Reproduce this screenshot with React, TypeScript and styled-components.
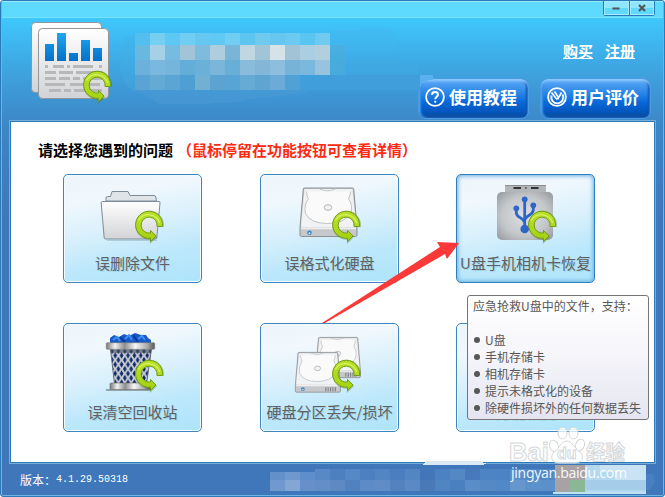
import React from "react";
import styled, { createGlobalStyle, css } from "styled-components";

const GlobalStyle = createGlobalStyle`
  * { box-sizing: border-box; }
  html, body { margin: 0; padding: 0; overflow: hidden; background: #fff; }
  body { font-family: "Noto Sans CJK SC", "Noto Sans", sans-serif; }
`;

const Window = styled.div`
  position: relative;
  display: flex;
  flex-direction: column;
  width: 665px;
  height: 497px;
  overflow: hidden;
  border: 1px solid #2a79b8;
  border-radius: 3px;
  background: linear-gradient(#3fc8fc 0, #3fc8fc 17px, #3eb4ee 45px, #3e9fdb 78px, #3d88c8 120px, #3d80c1 160px, #4077ba 215px);
  box-shadow: inset 0 0 0 1px #6fb3e4;
`;

const TitleBar = styled.div`
  display: flex;
  justify-content: flex-end;
  flex: none;
  height: 17px;
  margin: 0 1px;
  padding-right: 8px;
  background: #5fdaff;
  border-top: 1px solid #9be9ff;
  border-bottom: 1px solid #74e2ff;
`;

const WindowControls = styled.div`
  display: flex;
  width: 52px;
  height: 15px;
  margin-top: -1px;
  border: 1px solid #2a79b8;
  border-top: 0;
  border-radius: 0 0 3px 3px;
  background: linear-gradient(#8fe7ff 50%, #5fd9fe 50%);
`;

const ControlButton = styled.button`
  display: flex;
  flex: 1;
  align-items: center;
  justify-content: center;
  padding: 0;
  border: 0;
  background: none;
  box-shadow: inset 0 0 0 1px #a6ecff;
  & + & { border-left: 1px solid #2a79b8; }
`;

const Header = styled.header`
  display: flex;
  flex: none;
  justify-content: space-between;
  height: 102px;
  padding: 0 13px 0 29px;
`;

const Logo = styled.svg`
  width: 84px;
  height: 84px;
  margin-top: 2px;
`;

const HeaderActions = styled.div`
  display: flex;
  flex-direction: column;
  align-items: flex-end;
`;

const Links = styled.nav`
  display: flex;
  gap: 12px;
  height: 60px;
  padding: 23px 16px 0 0;
`;

const Link = styled.a`
  color: #fff;
  font-size: 15px;
  font-weight: 700;
  line-height: 19px;
  height: 18px;
  border-bottom: 1px solid #fff;
`;

const ButtonRow = styled.div`
  display: flex;
  gap: 11px;
`;

const BigButton = styled.button`
  display: flex;
  align-items: center;
  gap: 4px;
  width: 111px;
  height: 41px;
  padding: 0 0 3px 6px;
  border: 1px solid #4b9ce4;
  border-radius: 8px;
  background: linear-gradient(#6cb6fb 0, #4a9bf1 14%, #2482e6 40%, #0868d8 60%, #0456bc 85%, #104a99 100%);
  box-shadow: inset 0 2px 2px #8cc9ff, inset 2px 0 2px #368ee8, inset -2px 0 2px #0b50ac;
  color: #fff;
  font-family: inherit;
  font-size: 17px;
  font-weight: 700;
  line-height: 22px;
  white-space: nowrap;
`;

const Panel = styled.main`
  flex: none;
  width: 647px;
  height: 344px;
  margin-left: 8px;
  padding: 17px 0 0 28px;
  border: 1px solid #77add9;
  background: #fff;
  box-shadow: inset 0 0 0 1px #2a79b8;
`;

const Question = styled.h1`
  display: flex;
  margin: 0;
  height: 24px;
  line-height: 23px;
  font-size: 15px;
  font-weight: 700;
  color: #000;
`;

const Hint = styled.span`
  margin-left: 4px;
  color: #fb2b13;
`;

const CardGrid = styled.div`
  display: grid;
  grid-template-columns: 197px 196px 139px;
  row-gap: 40px;
  padding: 12px 0 0 25px;
`;

const Card = styled.button<{ $active?: boolean }>`
  display: flex;
  flex-direction: column;
  align-items: center;
  width: 139px;
  height: 109px;
  padding: 0;
  border: 1px solid #3d86c1;
  border-radius: 5px;
  background: linear-gradient(168deg, #edf5fc 0%, #f0f8fd 22%, #d9f0fc 48%, #bde8fb 72%, #ade4fb 100%);
  box-shadow: inset 0 0 0 1px #f4fbff;
  font-family: inherit;
  ${(p) => p.$active && css`
    border-color: #2f80bf;
    box-shadow: inset 0 0 4px 1px #67aedd;
  `}
`;

const Art = styled.svg`
  flex: none;
  width: 137px;
  height: 76px;
`;

const CardLabel = styled.span`
  height: 24px;
  line-height: 24px;
  color: #625f60;
  font-size: 15px;
  white-space: nowrap;
  text-shadow: 1px 1px 1px #9bd0e6;
`;

const Footer = styled.footer`
  display: flex;
  align-items: center;
  flex: 1;
  padding: 0 0 1px 19px;
  color: #fff;
  font-size: 12px;
`;

const VersionNumber = styled.span`
  font-family: "Liberation Mono", monospace;
  font-size: 10px;
`;

const Tooltip = styled.div`
  position: absolute;
  left: 466px;
  top: 294px;
  width: 182px;
  height: 125px;
  padding: 1px 0 0 5px;
  border: 1px solid #767676;
  border-radius: 3px;
  background: linear-gradient(#fff, #f6f6fb 45%, #e4e5f0);
  color: #575757;
  font-size: 12px;
  line-height: 17px;
  white-space: nowrap;
`;

const TipList = styled.ul`
  margin: 17px 0 0;
  padding: 0;
  list-style: none;
`;

const TipItem = styled.li`
  display: flex;
  align-items: center;
  gap: 5px;
  height: 17px;
  padding-left: 1px;
  &::before {
    content: "";
    width: 6px;
    height: 6px;
    border-radius: 50%;
    background: #575757;
  }
`;

const Overlay = styled.svg`
  position: absolute;
  left: -1px;
  top: -1px;
  width: 665px;
  height: 497px;
  pointer-events: none;
`;

const Gradients = () => (
  <defs>
    <linearGradient id="lime" x1="0" y1="0" x2="0" y2="1">
      <stop offset="0" stopColor="#b9e02c" />
      <stop offset="1" stopColor="#a5d110" />
    </linearGradient>
    <linearGradient id="paper" x1="0" y1="0" x2="0" y2="1">
      <stop offset="0" stopColor="#ffffff" />
      <stop offset="1" stopColor="#d2d3d6" />
    </linearGradient>
    <linearGradient id="bar" x1="0" y1="0" x2="0" y2="1">
      <stop offset="0" stopColor="#20a6f2" />
      <stop offset="1" stopColor="#0470c8" />
    </linearGradient>
    <linearGradient id="metal" x1="0" y1="0" x2="1" y2="0">
      <stop offset="0" stopColor="#777" />
      <stop offset="0.18" stopColor="#f1f1f1" />
      <stop offset="0.38" stopColor="#8e8e8e" />
      <stop offset="0.6" stopColor="#f7f7f7" />
      <stop offset="0.85" stopColor="#a9a9a9" />
      <stop offset="1" stopColor="#555" />
    </linearGradient>
    <radialGradient id="usb" cx="0.5" cy="0.5" r="0.7">
      <stop offset="0" stopColor="#dfe1e3" />
      <stop offset="0.6" stopColor="#c3c6c9" />
      <stop offset="1" stopColor="#93989c" />
    </radialGradient>
    <pattern id="mesh" width="6.4" height="9" patternUnits="userSpaceOnUse" x="49" y="28">
      <rect width="6.4" height="9" fill="#c6cad1" />
      <path d="M3.2 1.3 5 4.5 3.2 7.7 1.4 4.5Z M0-3.2 1.8 0 0 3.2-1.8 0Z M6.4-3.2 8.2 0 6.4 3.2 4.6 0Z M0 5.8 1.8 9 0 12.2-1.8 9Z M6.4 5.8 8.2 9 6.4 12.2 4.6 9Z" fill="#122b68" />
    </pattern>
  </defs>
);

const RestoreArrow = ({ x, y }: { x: number; y: number }) => (
  <g transform={`translate(${x} ${y})`}>
    <path d="M28.3 16.2A13.8 13.8 0 1 0 15.5 28V31.6L21.8 25.6" fill="none" stroke="#46701b" strokeWidth="1.2" opacity=".35" />
    <path d="M27.5 15.5A13.5 13.5 0 1 0 15.5 27.2V30.6L21 25 15.5 19.4V22A8 8 0 1 1 22 15.5Z" fill="url(#lime)" stroke="#719f12" strokeWidth="1" />
    <path d="M24.8 12A11.8 11.8 0 0 0 3.4 9.5" fill="none" stroke="#d9f261" strokeWidth="1.3" />
  </g>
);

const FolderArt = () => (
  <g stroke="#7d8c98">
    <path d="M43 27V24Q43 22.5 44.5 22.5H47.5L49 17.5H65L67 21.5H91Q92.5 21.5 92.8 23L93.5 27Z" fill="#dfe4e8" />
    <path d="M39.5 27.5H96Q97.3 27.5 97 29L93.8 64Q93.6 65 92.5 65H42.5Q41.4 65 41.2 64L38.2 29Q38 27.5 39.5 27.5Z" fill="url(#paper)" />
    <path d="M40 28.7H95.5" stroke="#fff" />
    <path d="M44 66.5H94" stroke="#9cb6c4" opacity=".6" />
  </g>
);

const Drive = ({ transform, vents }: { transform: string; vents?: boolean }) => (
  <g transform={transform}>
    <path d="M5 .5H53Q54 .5 54.2 1.5L57.5 40V47.5Q57.5 49 56 49H2Q.5 49 .5 47.5V40L3.8 1.5Q4 .5 5 .5Z" fill="#c6c8cb" stroke="#8c9093" />
    <path d="M5 1.5H53L56.5 38.5Q56.5 40 55 40H3Q1.5 40 1.5 38.5Z" fill="#f1f2f3" />
    <path d="M7 4Q7 9 9 11Q4 18 6 26Q11 36 28 36T51 26Q54 18 49 11Q51 8 51 4" fill="#fafafa" stroke="#bfc3c6" />
    <path d="M20 1.5Q28 5 36 1.5" fill="none" stroke="#c4c7ca" />
    <ellipse cx="28.5" cy="20" rx="3.8" ry="2.8" fill="#f2f2f2" stroke="#b0b4b7" />
    <path d="M1.5 41H56.5" stroke="#efefef" strokeWidth="1.5" />
    <circle cx="10" cy="45.2" r="2.3" fill="#3d83ca" />
    <circle cx="10" cy="45.8" r="1" fill="#c5efff" />
    {vents && <path d="M39 43V48M42 43V48M45 43V48M48 43V48M51 43V48" stroke="#777b80" strokeWidth="1.3" />}
  </g>
);

const DriveArt = () => <Drive transform="translate(39.5 13.5)" />;

const PartitionArt = () => (
  <>
    <Drive transform="translate(55.5 14) scale(.78 .83)" vents />
    <Drive transform="translate(35 29) scale(.79 .82)" vents />
  </>
);

const UsbArt = () => (
  <>
    <rect x="49" y="11" width="41" height="8" fill="#b2b6b9" />
    <path d="M49 11.5H90" stroke="#8a8e91" />
    <path d="M57.5 14H65M75 14H82.5" stroke="#333" strokeWidth="2" />
    <rect x="69" y="13" width="1.6" height="1.8" fill="#555" />
    <rect x="41" y="18" width="56" height="48" rx="5" fill="url(#usb)" />
    <path d="M68.7 26V54M60.3 35V39Q60.8 42 64 43.5T68.7 48.5M77.3 32V36Q77 39 73.5 41T68.7 45.5" fill="none" stroke="#2f66c6" strokeWidth="2.8" />
    <g fill="#2f66c6">
      <circle cx="68.7" cy="25.3" r="2.9" />
      <circle cx="60.3" cy="34.3" r="2.9" />
      <circle cx="77.3" cy="31.3" r="2.9" />
      <circle cx="68.7" cy="55" r="4.3" />
    </g>
  </>
);

const TrashArt = () => (
  <>
    <path d="M43 67H88" stroke="#7d8b94" strokeWidth="1.5" />
    <path d="M47 20V15L51 12 56 14 61 11 66 13 72 10 78 12 83 12 85 15 88 17V20Z" fill="#1859c8" />
    <path d="M50 17 54 14 57 18M62 16 66 12 69 17M75 16 79 13 82 17" fill="none" stroke="#3d91f4" strokeWidth="2" />
    <path d="M57 14 62 19M70 12 75 19" stroke="#0b348e" strokeWidth="1.5" />
    <path d="M47.5 26H88.5L83.5 61H51.5Z" fill="url(#mesh)" stroke="#666c75" />
    <path d="M47.5 27H88L87.5 30H48Z" fill="#4b525d" opacity=".6" />
    <rect x="43.3" y="19.7" width="48.4" height="6.6" rx="1" fill="url(#metal)" stroke="#777" strokeWidth=".6" />
    <rect x="47" y="60" width="40" height="6.5" rx="1" fill="url(#metal)" stroke="#6b6b6b" strokeWidth=".6" />
  </>
);

const cards: { label: string; art?: React.ReactNode; active?: boolean }[] = [
  { label: "误删除文件", art: <FolderArt /> },
  { label: "误格式化硬盘", art: <DriveArt /> },
  { label: "U盘手机相机卡恢复", art: <UsbArt />, active: true },
  { label: "误清空回收站", art: <TrashArt /> },
  { label: "硬盘分区丢失/损坏", art: <PartitionArt /> },
  { label: "万能恢复" },
];

const tips = ["U盘", "手机存储卡", "相机存储卡", "提示未格式化的设备", "除硬件损坏外的任何数据丢失"];

const headerMosaic: { y: number; h: number; cells: string[] }[] = [
  { y: 33, h: 12, cells: ["#53bfee", "#75cff3", "#5dc8f4", "#70cdf3", "#66c8f0", "#5fc8f3", "#72cdf3", "#5cc6f1", "#70caef", "#66c6ef", "#6bcaf1", "#5bc5f1", "#69cbf3", "#71cbf0"] },
  { y: 45, h: 15, cells: ["#69b8df", "#a6d0e5", "#76bce0", "#a1c4d8", "#7fbcdb", "#aecddd", "#78b5d6", "#c0d7e2", "#a2c4d7", "#d5e3e9", "#a2c2d5", "#abcee2", "#b1cfdd"] },
  { y: 60, h: 15, cells: ["#6cb1db", "#7ab8df", "#75b5db", "#62aed9", "#6bb0d8", "#79b6da", "#68afd8", "#89bbdb", "#83b6d7", "#8dbedd", "#76b3d7", "#7bb8de", "#98c3dc"] },
  { y: 75, h: 15, cells: ["#5aa4d5", "#65aad5", "#5ba5d5", "#509fd2", "#71afd3", "#5da3d1", "#58a5d5", "#65abd6", "#5fa5d1", "#6aabd7", "#50a2d6"] },
];

const footerMosaic: string[][] = [
  ["#6490ca", "#6f98ce", "#5f8fcb", "#5888c6", "#4c80c1", "#5588c6", "#4d80c0", "#5185c4", "#4b7ec0", "#5385c3", "#4376b9", "#4a82c4", "#5388c5", "#4779bc", "#4d84c4", "#4b83c4", "#598fcb", "#5389c8", "#5188c6", "#4f88c7", "#9ba3ac"],
  ["#7299cf", "#83a6d5", "#678fc9", "#638fc9", "#5f89c3", "#5181bf", "#5c8bc7", "#618dc7", "#5482bf", "#5a89c5", "#4a79b8", "#5085c4", "#4a80c0", "#5a8cc8", "#5589c5", "#5189c6", "#6796cf", "#5b92cc", "#5c90cb", "#6294cb", "#a99fa0"],
];

const HeaderMosaic = () => (
  <g shapeRendering="crispEdges">
    <path d="M330 30 390 29 396 36 395 49 386 52H330Z" fill="#42b6ee" opacity=".5" />
    <path d="M330 60H390L410 63 418 66V75H330Z" fill="#3fa9e3" opacity=".5" />
    <path d="M330 45H345V75H330Z" fill="#4badda" opacity=".7" />
    <path d="M125 36 135 33V93L125 84 120 67Z" fill="#45aee4" opacity=".3" />
    <path d="M135 90H300L310 92 245 100 240 102 200 104H160L149 97 135 91Z" fill="#4b99d3" opacity=".6" />
    {headerMosaic.map((row, r) =>
      row.cells.map((fill, c) => <rect key={`${r}-${c}`} x={c === 13 ? 320 : 135 + c * 15} y={row.y} width={c === 13 ? 10 : 15} height={row.h} fill={fill} />)
    )}
    <rect x="300" y="75" width="120" height="15" fill="#409edb" />
    <path d="M420 75H433V80L429 80 421 84 420 90Z" fill="#5bb0f0" />
  </g>
);

const FooterMosaic = () => (
  <g shapeRendering="crispEdges">
    {footerMosaic.map((row, r) =>
      row.map((fill, c) => <rect key={`${r}-${c}`} x={270 + c * 15} y={r ? 480 : c < 3 ? 472 : 469} width="15" height={r ? 11 : c < 3 ? 8 : 11} fill={fill} />)
    )}
    <path d="M555 465H585V492H555Z" fill="#a8a2a4" />
    <path d="M570 480H585V492H570Z" fill="#8bb795" />
    <path d="M585 465H646V494H585Z" fill="#b3d8f0" />
    <path d="M585 480H646V490H585Z" fill="#a5cdea" />
    <path d="M600 465H646V480H615V472H600Z" fill="#c9e3f4" />
    <path d="M553 492H646V494H553Z" fill="#bfe2f2" />
    <path d="M426 461H480L487 464 480 465H423Z" fill="#d9e9f5" />
    <path d="M646 474 653 474 655 482 651 489 646 490Z" fill="#477fc0" />
  </g>
);

const Watermark = () => (
  <g fontFamily='"Liberation Sans", "Noto Sans CJK SC", sans-serif'>
    <g fill="#fff" fillOpacity=".75" stroke="#d5d8da" strokeWidth="1">
      <text x="509" y="461" fontSize="26" fontWeight="700" textLength="40" lengthAdjust="spacingAndGlyphs">Bai</text>
      <ellipse cx="554" cy="446" rx="4.3" ry="6" transform="rotate(-20 554 446)" />
      <ellipse cx="562.5" cy="433" rx="4.5" ry="6" />
      <ellipse cx="573.5" cy="433" rx="4.5" ry="6" />
      <ellipse cx="580" cy="445" rx="4.3" ry="6" transform="rotate(20 580 445)" />
      <path d="M567 441C572 441 574 448 580 452C585 457 582 463 575 463H559C551 463 550 456 554 452C560 448 561 441 567 441Z" />
      <text x="557" y="459" fontSize="16" fontWeight="700">du</text>
      <text x="586" y="460" fontSize="20" fontWeight="700" textLength="39" lengthAdjust="spacingAndGlyphs">经验</text>
    </g>
    <text x="511" y="478" fontSize="14" fontFamily='"Noto Sans", sans-serif' fill="#fff" fillOpacity=".9" textLength="116">jingyan.baidu.com</text>
  </g>
);

export default function App() {
  return (
    <>
      <GlobalStyle />
      <Window>
        <TitleBar>
          <WindowControls>
            <ControlButton aria-label="最小化">
              <svg width="8" height="8" viewBox="0 0 8 8"><path d="M.5 4.5H7.5" stroke="#555" strokeWidth="2" /></svg>
            </ControlButton>
            <ControlButton aria-label="关闭">
              <svg width="8" height="8" viewBox="0 0 8 8"><path d="M1 1 7 7M7 1 1 7" stroke="#555" strokeWidth="2.2" /></svg>
            </ControlButton>
          </WindowControls>
        </TitleBar>
        <Header>
          <Logo viewBox="30 20 84 84">
            <Gradients />
            <rect x="31.5" y="22.5" width="70" height="70" rx="4" fill="url(#paper)" stroke="#929599" />
            <rect x="38.5" y="28.5" width="70" height="70" rx="4" fill="url(#paper)" stroke="#929599" />
            <path d="M45 44h9v17h-9zM57 33h9v28h-9zM69 53h9v8h-9zM81 40h9v21h-9zM93 48h9v13h-9z" fill="url(#bar)" />
            <path d="M45 65h3v3h-3zM53 65h11v3H53zM67 65h3v3h-3zM73 65h20v3H73zM99 65h3v3h-3zM45 71h11v3H45zM59 71h14v3H59zM76 71h26v3H76zM45 77h11v3H45zM59 77h11v3H59zM73 77h7v3h-7zM83 77h19v3H83zM45 83h20v3H45zM70 83h30v3H70zM49 89h12v3H49zM64 89h7v3h-7zM74 89h28v3H74z" fill="#b7b8ba" />
            <RestoreArrow x={83} y={71} />
          </Logo>
          <HeaderActions>
            <Links>
              <Link>购买</Link>
              <Link>注册</Link>
            </Links>
            <ButtonRow>
              <BigButton>
                <svg width="20" height="20" viewBox="0 0 20 20" fill="none" stroke="#fff">
                  <circle cx="10" cy="10" r="8.9" strokeWidth="1.8" />
                  <path d="M7 7.8Q7 5 10 5T13 7.8C13 9.5 10.2 10 10.2 12.2" strokeWidth="2" />
                  <circle cx="10.2" cy="14.8" r=".7" fill="#fff" />
                </svg>
                使用教程
              </BigButton>
              <BigButton>
                <svg width="20" height="20" viewBox="0 0 20 20" fill="none" stroke="#fff">
                  <circle cx="10" cy="10" r="8.9" strokeWidth="1.8" />
                  <path d="M4.6 8.5A6 6 0 1 0 15.6 7.5" strokeWidth="1.8" />
                  <path d="M4.5 5.5 10 12.5M7.5 4.5 11.5 10.5" strokeWidth="1.6" />
                  <path d="M10.5 12.5 14.5 5.5" strokeWidth="1.6" />
                </svg>
                用户评价
              </BigButton>
            </ButtonRow>
          </HeaderActions>
        </Header>
        <Panel>
          <Question>
            请选择您遇到的问题<Hint>（鼠标停留在功能按钮可查看详情）</Hint>
          </Question>
          <CardGrid>
            {cards.map((card) => (
              <Card key={card.label} $active={card.active}>
                <Art viewBox="1 1 137 76">
                  {card.art}
                  {card.art && <RestoreArrow x={72} y={37} />}
                </Art>
                <CardLabel>{card.label}</CardLabel>
              </Card>
            ))}
          </CardGrid>
        </Panel>
        <Footer>
          版本：<VersionNumber>4.1.29.50318</VersionNumber>
        </Footer>
        <Tooltip>
          应急抢救U盘中的文件，支持：
          <TipList>
            {tips.map((tip) => <TipItem key={tip}>{tip}</TipItem>)}
          </TipList>
        </Tooltip>
        <Overlay viewBox="0 0 665 497">
          <HeaderMosaic />
          <FooterMosaic />
          <path d="M322 323 440 247 437 242 459 243 447 259 445 254 325 323Z" fill="#fb3938" />
          <Watermark />
        </Overlay>
      </Window>
    </>
  );
}
